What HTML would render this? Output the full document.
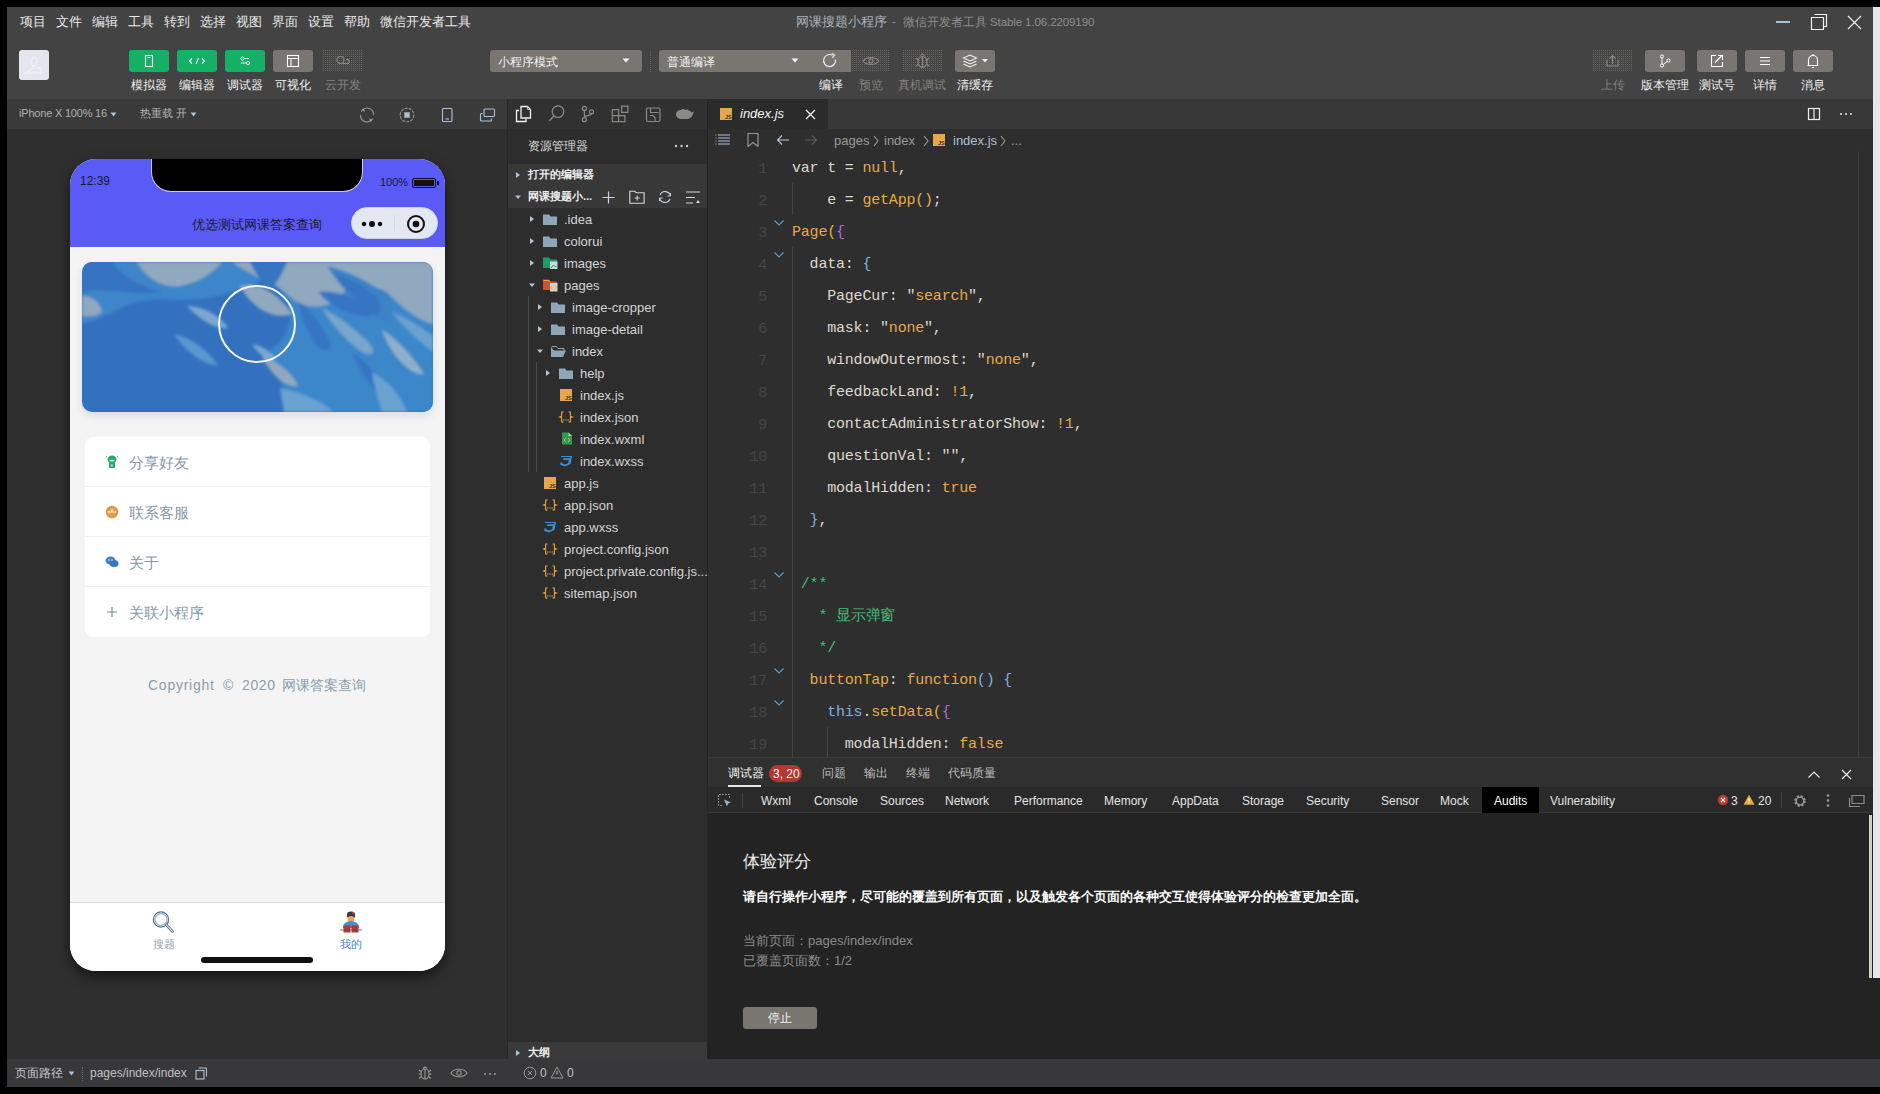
<!DOCTYPE html>
<html><head><meta charset="utf-8">
<style>
*{box-sizing:border-box;margin:0;padding:0}
html,body{width:1880px;height:1094px;overflow:hidden;background:#000;font-family:"Liberation Sans",sans-serif;}
.a{position:absolute}
.t{position:absolute;white-space:nowrap;line-height:1}
#top{left:7px;top:7px;width:1873px;height:92px;background:#434343}
#strip{left:1873px;top:7px;width:7px;height:971px;background:#e4e7ef}
#sim{left:7px;top:99px;width:500px;height:960px;background:#2f2f2f}
#simbar{left:7px;top:99px;width:500px;height:30px;background:#3a3a3a}
#sep1{left:507px;top:99px;width:1px;height:988px;background:#262626}
#exp{left:508px;top:99px;width:199px;height:960px;background:#2d2d2d}
#sep2{left:707px;top:99px;width:1px;height:960px;background:#232323}
#ed{left:708px;top:99px;width:1165px;height:658px;background:#2e2e2e}
#tabbar{left:708px;top:99px;width:1165px;height:30px;background:#383838}
#dbg{left:708px;top:757px;width:1172px;height:302px;background:#232323}
#status{left:7px;top:1059px;width:1873px;height:28px;background:#38383a}

.btn{top:50px;width:40px;height:22px;border-radius:3px}
.g{background:#13b066}
.gr{background:#79756f}
.dot{background-image:linear-gradient(90deg,transparent 50%,#434343 50%),linear-gradient(0deg,#434343 50%,#6c6964 50%);background-size:2px 2px;border-radius:0}
.lbl{top:79px;font-size:12px;color:#f0f0f0}

#phone{left:70px;top:159px;width:375px;height:812px;border-radius:26px;overflow:hidden;background:#f4f4f4;box-shadow:0 6px 14px rgba(0,0,0,0.55)}
#banner{left:12px;top:103px;width:351px;height:150px;border-radius:10px;overflow:hidden;box-shadow:0 4px 8px rgba(40,60,120,0.12)}
.li{left:59px;font-size:15px;color:#8299aa}
.fn{font-size:13px;color:#d4d4d4}
.bc{top:134px;font-size:13px;color:#9a9a9a}
.bcc{top:135px;width:7px;height:12px}
.ln{left:730px;width:37px;text-align:right;font-family:"Liberation Mono",monospace;font-size:15px;color:#464646;letter-spacing:-0.2px}
.code{left:792px;font-family:"Liberation Mono",monospace;font-size:15px;letter-spacing:-0.2px}
.dt{top:795px;font-size:12px;color:#e4e4e4}
.cp{top:519px;font-size:14px;color:#8a9eaf}
</style></head><body>
<div class="a" id="top"></div>
<div class="a" id="sim"></div>
<div class="a" id="simbar"></div>
<div class="a" id="sep1"></div>
<div class="a" id="exp"></div>
<div class="a" id="sep2"></div>
<div class="a" id="ed"></div>
<div class="a" id="tabbar"></div>
<div class="a" id="dbg"></div>
<div class="a" id="status"></div>

<!-- MENU -->
<div class="t" style="left:20px;top:15px;font-size:13px;color:#e8e8e8;word-spacing:0">
<span style="position:absolute;left:0">项目</span><span style="position:absolute;left:36px">文件</span><span style="position:absolute;left:72px">编辑</span><span style="position:absolute;left:108px">工具</span><span style="position:absolute;left:144px">转到</span><span style="position:absolute;left:180px">选择</span><span style="position:absolute;left:216px">视图</span><span style="position:absolute;left:252px">界面</span><span style="position:absolute;left:288px">设置</span><span style="position:absolute;left:324px">帮助</span><span style="position:absolute;left:360px">微信开发者工具</span>
</div>
<div class="t" style="left:796px;top:15px;font-size:13px;color:#a9b0bd">网课搜题小程序</div><div class="t" style="left:892px;top:16px;font-size:12px;color:#8d8d8d">-</div><div class="t" style="left:903px;top:16px;font-size:12px;color:#8d8d8d">微信开发者工具</div><div class="t" style="left:990px;top:17px;font-size:11.5px;color:#8d8d8d;letter-spacing:-0.1px">Stable 1.06.2209190</div>
<!-- window controls -->
<div class="a" style="left:1776px;top:21px;width:14px;height:2px;background:#a9c0d6"></div>
<svg class="a" style="left:1810px;top:13px" width="18" height="18" viewBox="0 0 18 18"><path d="M4.5 1.5h12v12h-3M1.5 4.5h12v12h-12z" fill="none" stroke="#f0f0f0" stroke-width="1.2"/></svg>
<svg class="a" style="left:1847px;top:15px" width="15" height="15" viewBox="0 0 15 15"><path d="M1 1L14 14M14 1L1 14" stroke="#eee" stroke-width="1.2"/></svg>
<!-- avatar -->
<div class="a" style="left:19px;top:50px;width:30px;height:30px;background:#e4e6ee;border-radius:3px"></div>
<svg class="a" style="left:19px;top:50px" width="30" height="30" viewBox="0 0 30 30"><ellipse cx="15" cy="11.5" rx="3" ry="4.2" fill="none" stroke="#fafafa" stroke-width="1.3" stroke-dasharray="1 1"/><path d="M14 16v2l-7 5h15v-5h-6" fill="none" stroke="#fafafa" stroke-width="1.3" stroke-dasharray="1 1"/></svg>
<!-- toolbar buttons -->
<div class="a btn g" style="left:129px"></div>
<div class="a btn g" style="left:177px"></div>
<div class="a btn g" style="left:225px"></div>
<div class="a btn gr" style="left:273px"></div>
<div class="a btn dot" style="left:323px;width:39px"></div>
<svg class="a" style="left:129px;top:50px" width="40" height="22"><rect x="16.5" y="5.5" width="7" height="11" fill="none" stroke="#fff" stroke-width="1.1"/><path d="M18.5 7.5h3" stroke="#fff"/></svg>
<svg class="a" style="left:177px;top:50px" width="40" height="22"><path d="M15 8.5l-2.5 2.5 2.5 2.5M25 8.5l2.5 2.5-2.5 2.5M21.5 8l-2.5 6" fill="none" stroke="#fff" stroke-width="1.1"/></svg>
<svg class="a" style="left:225px;top:50px" width="40" height="22"><circle cx="17.5" cy="8.5" r="1.6" fill="none" stroke="#fff" stroke-width="1"/><path d="M19 8.5h5M16 13h5" stroke="#dfe" stroke-width="1"/><circle cx="23" cy="13" r="1.6" fill="none" stroke="#fff" stroke-width="1"/></svg>
<svg class="a" style="left:273px;top:50px" width="40" height="22"><rect x="14.5" y="5.5" width="11" height="11" fill="none" stroke="#fff" stroke-width="1.1"/><path d="M14.5 8.5h11M18 8.5v8" stroke="#fff" stroke-width="1.1"/></svg>
<svg class="a" style="left:323px;top:50px" width="39" height="22"><circle cx="17.5" cy="10" r="3.5" fill="none" stroke="#8c8781" stroke-width="1.1"/><path d="M20 13.5h5.5l1-2-1.5-2h-2" fill="none" stroke="#8c8781" stroke-width="1.1"/></svg>
<div class="t lbl" style="left:131px">模拟器</div>
<div class="t lbl" style="left:179px">编辑器</div>
<div class="t lbl" style="left:227px">调试器</div>
<div class="t lbl" style="left:275px">可视化</div>
<div class="t lbl" style="left:325px;color:#85817b">云开发</div>
<!-- dropdowns -->
<div class="a" style="left:490px;top:50px;width:152px;height:22px;background:#79756f;border-radius:3px"></div>
<div class="t" style="left:498px;top:56px;font-size:12px;color:#f2f2f2">小程序模式</div>
<svg class="a" style="left:622px;top:58px" width="8" height="5"><path d="M0.5 0.5h7l-3.5 4z" fill="#f4f4f4"/></svg>
<div class="a" style="left:650px;top:51px;width:1px;height:21px;border-left:1px dotted #6a6a6a"></div>
<div class="a" style="left:659px;top:50px;width:192px;height:22px;background:#79756f;border-radius:3px 0 0 3px"></div>
<div class="t" style="left:667px;top:56px;font-size:12px;color:#f2f2f2">普通编译</div>
<svg class="a" style="left:791px;top:58px" width="8" height="5"><path d="M0.5 0.5h7l-3.5 4z" fill="#f4f4f4"/></svg>
<svg class="a" style="left:821px;top:52px" width="18" height="18" viewBox="0 0 18 18"><path d="M14.5 7.5A6 6 0 1 1 11.5 3.3" fill="none" stroke="#e8eef5" stroke-width="1.2"/><path d="M10.8 1.2l2.8 2.1-2.3 2.4" fill="none" stroke="#e8eef5" stroke-width="1.2"/></svg>
<div class="a btn dot" style="left:852px;width:38px"></div>
<div class="a btn dot" style="left:903px;width:39px"></div>
<svg class="a" style="left:852px;top:50px" width="38" height="22"><path d="M11 11c3-4.5 13-4.5 16 0c-3 4.5-13 4.5-16 0z" fill="none" stroke="#8c8781" stroke-width="1.1"/><circle cx="19" cy="11" r="2" fill="none" stroke="#8c8781" stroke-width="1.1"/></svg>
<svg class="a" style="left:903px;top:50px" width="39" height="22"><ellipse cx="19.5" cy="12" rx="4.5" ry="5.5" fill="none" stroke="#8c8781" stroke-width="1.1"/><path d="M19.5 6.5v11M13 8l2.5 2M26 8l-2.5 2M13 16l2.5-2M26 16l-2.5-2M17.5 5.5l2-1.5 2 1.5" fill="none" stroke="#8c8781" stroke-width="1.1"/></svg>
<div class="a" style="left:955px;top:50px;width:40px;height:22px;background:#79756f;border-radius:3px"></div>
<svg class="a" style="left:955px;top:50px" width="40" height="22"><path d="M8.5 8l6.5-3 6.5 3-6.5 3z M8.5 11l6.5 3 6.5-3 M8.5 14l6.5 3 6.5-3" fill="none" stroke="#eef3f8" stroke-width="1.1"/><path d="M27 9h6l-3 3.5z" fill="#f4f4f4"/></svg>
<div class="t lbl" style="left:819px">编译</div>
<div class="t lbl" style="left:859px;color:#85817b">预览</div>
<div class="t lbl" style="left:898px;color:#85817b">真机调试</div>
<div class="t lbl" style="left:957px">清缓存</div>
<!-- right toolbar -->
<div class="a btn dot" style="left:1593px;width:39px"></div>
<svg class="a" style="left:1593px;top:50px" width="39" height="22"><path d="M14 10v6h11v-6M19.5 14V5.5M16.5 8.5l3-3 3 3" fill="none" stroke="#8c8781" stroke-width="1.1"/></svg>
<div class="a btn gr" style="left:1645px"></div>
<div class="a btn gr" style="left:1697px"></div>
<div class="a btn gr" style="left:1745px"></div>
<div class="a btn gr" style="left:1793px"></div>
<svg class="a" style="left:1645px;top:50px" width="40" height="22"><circle cx="17" cy="6.5" r="1.6" fill="none" stroke="#fff" stroke-width="1"/><circle cx="17" cy="15.5" r="1.6" fill="none" stroke="#fff" stroke-width="1"/><circle cx="23.5" cy="10.5" r="1.6" fill="none" stroke="#fff" stroke-width="1"/><path d="M17 8v6M18.3 14.5l3.8-3" stroke="#fff" stroke-width="1"/></svg>
<svg class="a" style="left:1697px;top:50px" width="40" height="22"><path d="M19 5.5h-4.5v11h11V12M18 12.5l7-7M21 5.5h4.5V10" fill="none" stroke="#fff" stroke-width="1.1"/></svg>
<svg class="a" style="left:1745px;top:50px" width="40" height="22"><path d="M15 7.5h10M15 11h10M15 14.5h10" stroke="#fff" stroke-width="1.1"/></svg>
<svg class="a" style="left:1793px;top:50px" width="40" height="22"><path d="M15.5 15.5V10a4.5 4.5 0 0 1 9 0v5.5zM14.5 15.5h11M20 4v1.5M19 17.5h2" fill="none" stroke="#fff" stroke-width="1.1"/></svg>
<div class="t lbl" style="left:1601px;color:#85817b">上传</div>
<div class="t lbl" style="left:1641px">版本管理</div>
<div class="t lbl" style="left:1699px">测试号</div>
<div class="t lbl" style="left:1753px">详情</div>
<div class="t lbl" style="left:1801px">消息</div>

<!-- SIM TOOLBAR -->
<div class="t" style="left:19px;top:108px;font-size:11px;color:#b0b0b0;letter-spacing:-0.2px">iPhone X 100% 16</div>
<svg class="a" style="left:110px;top:112px" width="7" height="5"><path d="M0.5 0.5h6l-3 4z" fill="#a9c3da"/></svg>
<div class="t" style="left:140px;top:108px;font-size:11px;color:#b0b0b0">热重载 开</div>
<svg class="a" style="left:190px;top:112px" width="7" height="5"><path d="M0.5 0.5h6l-3 4z" fill="#a9c3da"/></svg>
<svg class="a" style="left:357px;top:105px" width="20" height="20" viewBox="0 0 20 20"><path d="M6 4.5A6.5 6.5 0 0 1 16.5 10M14 15.5A6.5 6.5 0 0 1 3.5 10" fill="none" stroke="#9a958f" stroke-width="1.1"/><path d="M4.5 6.5l1.5-2.5 1.5 2.5M15.5 13.5l-1.5 2.5-1.5-2.5" fill="none" stroke="#a9c3da" stroke-width="1"/></svg>
<svg class="a" style="left:397px;top:105px" width="20" height="20" viewBox="0 0 20 20"><circle cx="10" cy="10" r="6.8" fill="none" stroke="#9a958f" stroke-width="1.1" stroke-dasharray="3 1.2"/><rect x="7.3" y="7.3" width="5.4" height="5.4" fill="#a9c3da" stroke="#9a958f" stroke-width="0.6"/></svg>
<svg class="a" style="left:437px;top:105px" width="20" height="20" viewBox="0 0 20 20"><rect x="5.5" y="3.5" width="9.5" height="13" rx="1" fill="none" stroke="#a9c3da" stroke-width="1.1"/><path d="M8.5 14h3.5" stroke="#a9c3da" stroke-width="1.1"/></svg>
<svg class="a" style="left:477px;top:105px" width="20" height="20" viewBox="0 0 20 20"><rect x="7" y="4" width="10.5" height="7.5" rx="1" fill="none" stroke="#a9c3da" stroke-width="1.1"/><path d="M5.5 8.5h-1a1 1 0 0 0-1 1v5.5a1 1 0 0 0 1 1h9a1 1 0 0 0 1-1v-1.5" fill="none" stroke="#a9c3da" stroke-width="1.1"/></svg>
<!-- PHONE -->
<div class="a" id="phone">
  <div class="a" style="left:0;top:0;width:375px;height:88px;background:#5a5af6"></div>
  <div class="a" style="left:81px;top:-1px;width:212px;height:34px;background:#000;border-radius:0 0 20px 20px;border:1px solid #c9cbe8;border-top:none"></div>
  <div class="t" style="left:10px;top:16px;font-size:12px;color:#1a1a2a">12:39</div>
  <div class="t" style="left:310px;top:18px;font-size:11px;color:#1a1a2a">100%</div>
  <div class="a" style="left:342px;top:19px;width:24px;height:10px;border:1.5px solid #111;border-radius:2px;padding:1px"><div style="width:100%;height:100%;background:#111"></div></div>
  <div class="a" style="left:367px;top:22px;width:2px;height:4px;background:#111"></div>
  <div class="t" style="left:122px;top:59px;font-size:13px;color:#1b1b2b">优选测试网课答案查询</div>
  <div class="a" style="left:281px;top:48px;width:87px;height:32px;border-radius:16px;background:#e3e7ef;border:1px solid #d0d4de"></div>
  <div class="a" style="left:324px;top:56px;width:1px;height:16px;background:#d5d8de"></div>
  <svg class="a" style="left:290px;top:57px" width="26" height="16"><circle cx="4" cy="8" r="2.2" fill="#111"/><circle cx="12" cy="8" r="3" fill="#111"/><circle cx="20" cy="8" r="2.2" fill="#111"/></svg>
  <svg class="a" style="left:335px;top:54px" width="22" height="22"><circle cx="11" cy="11" r="8" fill="none" stroke="#111" stroke-width="2"/><circle cx="11" cy="11" r="3.3" fill="#111"/></svg>
  <!-- banner -->
  <div class="a" id="banner">
    <svg width="351" height="150" viewBox="0 0 351 150">
      <defs><filter id="bl" x="-10%" y="-10%" width="120%" height="120%"><feGaussianBlur stdDeviation="1.4"/></filter></defs>
      <rect width="351" height="150" fill="#3371bf"/>
      <g filter="url(#bl)">
        <path d="M0 0H205C185 18 160 30 125 36C95 42 65 30 35 48C18 56 8 60 0 62Z" fill="#3c86ca"/>
        <path d="M175 0H351V150H215C205 128 190 108 180 92C200 85 214 62 206 40Z" fill="#3b87ca"/>
        <path d="M0 0H30C40 15 60 25 80 30C60 35 30 25 0 30Z" fill="#3572c2"/>
        <path d="M55 0H140C132 10 118 20 98 24C80 26 64 16 55 0Z" fill="#91a9bf"/>
        <path d="M150 0H351V62C335 58 318 44 305 30C290 22 270 18 262 30C255 42 240 46 226 44C212 42 205 30 195 24C180 18 165 10 150 0Z" fill="#91a9bf"/>
        <path d="M245 4C262 8 285 18 300 30C312 40 312 52 308 62C300 60 290 50 280 42C268 34 258 24 245 4Z" fill="#3a82c8"/>
        <path d="M252 10C266 16 284 26 296 36C300 44 298 52 294 54C284 46 272 34 262 26C256 20 254 14 252 10Z" fill="#3474c4"/>
        <path d="M236 30C250 28 270 34 290 44C296 50 290 56 280 54C266 52 248 44 236 30Z" fill="#3474c4"/>
        <path d="M168 0H205C200 12 195 22 188 28C180 20 172 10 168 0Z" fill="#3474c2"/>
        <path d="M158 24C176 20 196 30 210 52C196 58 172 50 158 24Z" fill="#91a9bf"/>
        <path d="M216 40C226 44 236 58 246 76C252 90 240 92 232 80C224 66 218 52 216 40Z" fill="#3474c4"/>
        <path d="M240 46C256 54 272 66 286 80C296 90 290 96 280 90C266 80 252 66 240 46Z" fill="#78a6cc"/>
        <path d="M105 44C122 44 138 54 146 66C134 68 118 58 105 44Z" fill="#7aa8cf"/>
        <path d="M92 72C110 76 128 90 136 104C120 102 102 88 92 72Z" fill="#5a97cf"/>
        <path d="M0 34C10 34 18 40 20 50C12 56 5 54 0 54Z" fill="#91a9bf"/>
        <path d="M300 68C316 78 332 96 342 112C330 114 310 96 300 68Z" fill="#8fb0cc"/>
        <path d="M310 50C325 56 340 66 351 74V90C338 80 322 66 310 50Z" fill="#6aa2d0"/>
        <path d="M270 90C285 100 300 118 310 140C300 140 282 118 270 90Z" fill="#3474c4"/>
        <path d="M180 94C196 100 210 110 216 124C204 126 188 112 180 94Z" fill="#91a9bf"/>
        <path d="M170 82C180 84 190 90 194 98C186 100 176 92 170 82Z" fill="#7aa8cf"/>
        <path d="M198 126C218 130 238 138 252 150H202Z" fill="#6aa2d2"/>
        <path d="M290 110C305 118 318 132 325 150H300C296 136 292 124 290 110Z" fill="#6aa2d2"/>
      </g>
    </svg>
    <div class="a" style="left:136px;top:23px;width:78px;height:78px;border-radius:50%;border:2px solid #f4f6f8"></div>
  </div>
  <!-- card -->
  <div class="a" style="left:15px;top:278px;width:345px;height:200px;background:#fff;border-radius:8px"></div>
  <div class="a" style="left:15px;top:327px;width:345px;height:1px;background:#f0f0f0"></div>
  <div class="a" style="left:15px;top:377px;width:345px;height:1px;background:#f0f0f0"></div>
  <div class="a" style="left:15px;top:427px;width:345px;height:1px;background:#f0f0f0"></div>
  <div class="t li" style="top:296px">分享好友</div>
  <div class="t li" style="top:346px">联系客服</div>
  <div class="t li" style="top:396px">关于</div>
  <div class="t li" style="top:446px">关联小程序</div>
  <svg class="a" style="left:35px;top:295px" width="14" height="15" viewBox="0 0 14 15"><circle cx="1.5" cy="2.8" r=".7" fill="#9aa08f"/><circle cx="12.5" cy="2.8" r=".7" fill="#9aa08f"/><ellipse cx="7" cy="5.6" rx="4.4" ry="4" fill="#16b066"/><rect x="4" y="8" width="6" height="6" rx="1" fill="#16b066"/><rect x="4.6" y="5.8" width="4.8" height="1.6" fill="#fff"/><rect x="5.8" y="10.4" width="2" height="2" fill="#f3c9c0"/></svg>
  <svg class="a" style="left:35px;top:346px" width="14" height="14" viewBox="0 0 14 14"><circle cx="7" cy="7" r="6.3" fill="#e4a14c"/><path d="M2.5 7h9M7 4v3" stroke="#fff" stroke-width="1"/><circle cx="7" cy="7" r="5" fill="none" stroke="#b8552a" stroke-width="0.7" stroke-dasharray="0.8 1.2"/></svg>
  <svg class="a" style="left:35px;top:396px" width="14" height="14" viewBox="0 0 14 14"><ellipse cx="5.5" cy="5.5" rx="5" ry="4" fill="#3e82c6"/><ellipse cx="9" cy="8.5" rx="4.5" ry="3.6" fill="#3a78bc"/><circle cx="4" cy="5" r="0.7" fill="#fff"/><circle cx="7" cy="5" r="0.7" fill="#fff"/></svg>
  <svg class="a" style="left:36px;top:447px" width="12" height="12"><path d="M6 1v10M1 6h10" stroke="#6e8f99" stroke-width="1.1"/></svg>
  <div class="t cp" style="left:78px;letter-spacing:0.75px">Copyright</div><div class="t cp" style="left:153px">©</div><div class="t cp" style="left:172px;letter-spacing:0.6px">2020</div><div class="t cp" style="left:212px">网课答案查询</div>
  <!-- tabbar -->
  <div class="a" style="left:0;top:743px;width:375px;height:69px;background:#fff;border-top:1px solid #d6dde7"></div>
  <svg class="a" style="left:81px;top:750px" width="24" height="24" viewBox="0 0 24 24"><circle cx="10" cy="10.5" r="7.6" fill="none" stroke="#6d6d6d" stroke-width="1.3"/><circle cx="10" cy="10.5" r="6" fill="none" stroke="#8fbbe0" stroke-width="1.3"/><path d="M15.5 16l6 6.5" stroke="#6d6d6d" stroke-width="2.6" stroke-linecap="round"/><path d="M15.5 16l6 6.5" stroke="#b9d3ea" stroke-width="1.2" stroke-linecap="round"/></svg>
  <div class="t" style="left:83px;top:780px;font-size:11px;color:#9aa7b0">搜题</div>
  <svg class="a" style="left:269px;top:751px" width="24" height="24" viewBox="0 0 24 24"><path d="M8 4.5a4 3 0 0 1 8 0v3H8z" fill="#3a3a44"/><circle cx="14" cy="3" r="1" fill="#d33"/><ellipse cx="12" cy="9" rx="3.3" ry="3" fill="#e7a65a"/><path d="M4 17a8 6 0 0 1 16 0v1H4z" fill="#4b8fd1"/><path d="M4.5 15.5h7v7h-7zM12.5 15.5h7v7h-7z" fill="#b03a32"/><path d="M1 20h22" stroke="#555" stroke-width="0.8"/></svg>
  <div class="t" style="left:270px;top:780px;font-size:11px;color:#3f7fc0">我的</div>
  <div class="a" style="left:131px;top:798px;width:112px;height:6px;border-radius:3px;background:#111"></div>
</div>

<!-- EXPLORER -->
<div class="a" style="left:508px;top:99px;width:199px;height:30px;background:#313131"></div>
<svg class="a" style="left:508px;top:99px" width="199" height="30" viewBox="0 0 199 30">
<path d="M11 11.5H8.5v11h9.5V20" fill="none" stroke="#f2f2f2" stroke-width="1.3"/>
<path d="M13 7.5h6.5l3 3V19H13z" fill="none" stroke="#f2f2f2" stroke-width="1.3"/>
<path d="M19.5 7.5v3h3" fill="none" stroke="#a9c3da" stroke-width="1"/>
<circle cx="50" cy="12.6" r="5.8" fill="none" stroke="#8d8a85" stroke-width="1.2"/>
<path d="M45.8 17l-4.5 5" stroke="#8d8a85" stroke-width="1.3"/>
<circle cx="76.4" cy="9.4" r="2" fill="none" stroke="#8d8a85" stroke-width="1.2"/>
<circle cx="83.5" cy="12.8" r="2" fill="none" stroke="#8d8a85" stroke-width="1.2"/>
<circle cx="76.4" cy="20.7" r="2" fill="none" stroke="#8d8a85" stroke-width="1.2"/>
<path d="M76.4 11.4v7.3M83.5 14.8c0 2-7 1-7 3.5" fill="none" stroke="#8d8a85" stroke-width="1.2"/>
<path d="M104.3 10.6h6.3v6h-6.3zM104.3 16.6h6.3v6h-6.3zM110.6 16.6h6.3v6h-6.3zM113.6 7.2h6.3v6.2h-6.3z" fill="none" stroke="#8d8a85" stroke-width="1.2"/>
<rect x="138.5" y="9" width="13.5" height="13.5" rx="1.5" fill="none" stroke="#8d8a85" stroke-width="1.2"/>
<path d="M142.5 9v4.5h8M142 16.5h3l2 2v4" fill="none" stroke="#8d8a85" stroke-width="1.1"/>
<path d="M168 15.5c0-2.5 2-4.5 5-4.5c1 -1.5 3-1.5 4 0c1-1 3-.5 3.5.5c1.5 0 2.5 1 3 2l2.5-1-1 2.5c-.5 2.5-2.5 4.5-5 5h-6c-3 0-6-1.5-6-4.5z" fill="#8d8a85"/>
</svg>
<div class="t" style="left:528px;top:140px;font-size:12px;color:#dcdcdc">资源管理器</div>
<svg class="a" style="left:674px;top:144px" width="16" height="4"><circle cx="2" cy="2" r="1.2" fill="#ccc"/><circle cx="7.5" cy="2" r="1.2" fill="#ccc"/><circle cx="13" cy="2" r="1.2" fill="#ccc"/></svg>
<div class="a" style="left:508px;top:164px;width:199px;height:44px;background:#383838"></div>
<svg class="a" style="left:514px;top:171px" width="8" height="8"><path d="M2 1v6l4-3z" fill="#a9c3da"/></svg>
<div class="t" style="left:528px;top:169px;font-size:11px;color:#ececec;font-weight:bold">打开的编辑器</div>
<svg class="a" style="left:514px;top:193px" width="8" height="8"><path d="M1 2.5h6l-3 3.5z" fill="#a9c3da"/></svg>
<div class="t" style="left:528px;top:191px;font-size:11px;color:#ececec;font-weight:bold">网课搜题小...</div>
<svg class="a" style="left:601px;top:190px" width="15" height="15"><path d="M7.5 1.5v12M1.5 7.5h12" stroke="#c6d6e4" stroke-width="1.2"/></svg>
<svg class="a" style="left:629px;top:190px" width="16" height="15"><path d="M0.8 1.2h5l1.3 1.5h8v10.5H0.8z" fill="none" stroke="#d8d8d8" stroke-width="1.1"/><path d="M8.2 5.5v5M5.7 8h5" stroke="#c6d6e4" stroke-width="1.1"/></svg>
<svg class="a" style="left:657px;top:189px" width="16" height="16" viewBox="0 0 16 16"><path d="M3 6A5.5 5.5 0 0 1 13.5 7M13 10A5.5 5.5 0 0 1 2.5 9" fill="none" stroke="#c6d6e4" stroke-width="1.1"/><path d="M13.5 4v3h-3M2.5 12V9h3" fill="none" stroke="#c6d6e4" stroke-width="1"/></svg>
<svg class="a" style="left:685px;top:190px" width="16" height="15"><path d="M1 2h14M1 7.5h9M1 13h7" stroke="#d8d8d8" stroke-width="1.1"/><path d="M11 13l2-3 2 3z" fill="#d8d8d8"/></svg>
<svg class="a" style="left:528px;top:215px" width="8" height="8"><path d="M2 1v6l4-3z" fill="#b8c4d0"/></svg>
<svg class="a" style="left:543px;top:214px" width="14" height="11"><path d="M0 0.5h6l1.5 2H14V11H0z" fill="#8fa5b8"/></svg>
<div class="t fn" style="left:564px;top:213px">.idea</div>
<svg class="a" style="left:528px;top:237px" width="8" height="8"><path d="M2 1v6l4-3z" fill="#b8c4d0"/></svg>
<svg class="a" style="left:543px;top:236px" width="14" height="11"><path d="M0 0.5h6l1.5 2H14V11H0z" fill="#8fa5b8"/></svg>
<div class="t fn" style="left:564px;top:235px">colorui</div>
<svg class="a" style="left:528px;top:259px" width="8" height="8"><path d="M2 1v6l4-3z" fill="#b8c4d0"/></svg>
<svg class="a" style="left:543px;top:257px" width="15" height="12"><path d="M0 0.5h6l1.5 2H14V11H0z" fill="#1c9e6a"/><rect x="7" y="4.5" width="7.5" height="7.5" fill="#cfd6dc"/><path d="M8 11l2.5-3 2 2 1-1" stroke="#1c9e6a" fill="none"/></svg>
<div class="t fn" style="left:564px;top:257px">images</div>
<svg class="a" style="left:528px;top:281px" width="8" height="8"><path d="M1 2.5h6l-3 3.5z" fill="#b8c4d0"/></svg>
<svg class="a" style="left:543px;top:279px" width="15" height="13"><path d="M0 0.5h6l1.5 2H14V11H0z" fill="#c8552e"/><path d="M0.5 1.5h5.5l1 1.5" stroke="#e6a23c" fill="none"/><rect x="7" y="4" width="7.5" height="8.5" fill="#d6d2cc"/><path d="M9.5 6.5l-1.5 2 1.5 2M12 6.5l1.5 2-1.5 2" stroke="#e6a23c" fill="none" stroke-width="0.9"/></svg>
<div class="t fn" style="left:564px;top:279px">pages</div>
<svg class="a" style="left:536px;top:303px" width="8" height="8"><path d="M2 1v6l4-3z" fill="#b8c4d0"/></svg>
<svg class="a" style="left:551px;top:302px" width="14" height="11"><path d="M0 0.5h6l1.5 2H14V11H0z" fill="#8fa5b8"/></svg>
<div class="t fn" style="left:572px;top:301px">image-cropper</div>
<svg class="a" style="left:536px;top:325px" width="8" height="8"><path d="M2 1v6l4-3z" fill="#b8c4d0"/></svg>
<svg class="a" style="left:551px;top:324px" width="14" height="11"><path d="M0 0.5h6l1.5 2H14V11H0z" fill="#8fa5b8"/></svg>
<div class="t fn" style="left:572px;top:323px">image-detail</div>
<svg class="a" style="left:536px;top:347px" width="8" height="8"><path d="M1 2.5h6l-3 3.5z" fill="#b8c4d0"/></svg>
<svg class="a" style="left:551px;top:346px" width="15" height="11"><path d="M0.5 0.5h5l1.5 2h6v2" fill="none" stroke="#8fa5b8" stroke-width="1"/><path d="M0 1v10h12l3-6.5H3z" fill="#8fa5b8"/></svg>
<div class="t fn" style="left:572px;top:345px">index</div>
<svg class="a" style="left:544px;top:369px" width="8" height="8"><path d="M2 1v6l4-3z" fill="#b8c4d0"/></svg>
<svg class="a" style="left:559px;top:368px" width="14" height="11"><path d="M0 0.5h6l1.5 2H14V11H0z" fill="#8fa5b8"/></svg>
<div class="t fn" style="left:580px;top:367px">help</div>
<svg class="a" style="left:560px;top:389px" width="12" height="12"><rect width="12" height="12" fill="#e6a74a"/><text x="5" y="10.5" font-size="5.5" font-family="Liberation Sans" fill="#333" font-weight="bold">JS</text></svg>
<div class="t fn" style="left:580px;top:389px">index.js</div>
<svg class="a" style="left:558px;top:411px" width="16" height="12"><path d="M5.5 1H3.6v4.3L1.6 6l2 .7V11h1.9M10.5 1h1.9v4.3l2 .7-2 .7V11h-1.9" fill="none" stroke="#e6a43c" stroke-width="1.1"/><circle cx="5.8" cy="9" r=".65" fill="#e6a43c"/><circle cx="8" cy="9" r=".65" fill="#aaa"/><circle cx="10.2" cy="9" r=".65" fill="#e6a43c"/></svg>
<div class="t fn" style="left:580px;top:411px">index.json</div>
<svg class="a" style="left:561px;top:432px" width="12" height="13"><path d="M1 0.5h6.5l3.5 3.5v8.5H1z" fill="#2e9a55"/><path d="M7.5 0.5v3.5h3.5" fill="#b7d7a8"/><path d="M5 6l-2 2 2 2M7 6l2 2-2 2" stroke="#e6b450" fill="none" stroke-width="0.9"/></svg>
<div class="t fn" style="left:580px;top:433px">index.wxml</div>
<svg class="a" style="left:559px;top:455px" width="14" height="12"><path d="M2 1h11l-1.5 8-6 2.5-4.5-2 .5-2h2l-.3 1 2.5 1 3.5-1.2.6-3.3H4l.4-1.8h6.8l.3-1.2H2z" fill="#3f8fd8"/></svg>
<div class="t fn" style="left:580px;top:455px">index.wxss</div>
<svg class="a" style="left:544px;top:477px" width="12" height="12"><rect width="12" height="12" fill="#e6a74a"/><text x="5" y="10.5" font-size="5.5" font-family="Liberation Sans" fill="#333" font-weight="bold">JS</text></svg>
<div class="t fn" style="left:564px;top:477px">app.js</div>
<svg class="a" style="left:542px;top:499px" width="16" height="12"><path d="M5.5 1H3.6v4.3L1.6 6l2 .7V11h1.9M10.5 1h1.9v4.3l2 .7-2 .7V11h-1.9" fill="none" stroke="#e6a43c" stroke-width="1.1"/><circle cx="5.8" cy="9" r=".65" fill="#e6a43c"/><circle cx="8" cy="9" r=".65" fill="#aaa"/><circle cx="10.2" cy="9" r=".65" fill="#e6a43c"/></svg>
<div class="t fn" style="left:564px;top:499px">app.json</div>
<svg class="a" style="left:543px;top:521px" width="14" height="12"><path d="M2 1h11l-1.5 8-6 2.5-4.5-2 .5-2h2l-.3 1 2.5 1 3.5-1.2.6-3.3H4l.4-1.8h6.8l.3-1.2H2z" fill="#3f8fd8"/></svg>
<div class="t fn" style="left:564px;top:521px">app.wxss</div>
<svg class="a" style="left:542px;top:543px" width="16" height="12"><path d="M5.5 1H3.6v4.3L1.6 6l2 .7V11h1.9M10.5 1h1.9v4.3l2 .7-2 .7V11h-1.9" fill="none" stroke="#e6a43c" stroke-width="1.1"/><circle cx="5.8" cy="9" r=".65" fill="#e6a43c"/><circle cx="8" cy="9" r=".65" fill="#aaa"/><circle cx="10.2" cy="9" r=".65" fill="#e6a43c"/></svg>
<div class="t fn" style="left:564px;top:543px">project.config.json</div>
<svg class="a" style="left:542px;top:565px" width="16" height="12"><path d="M5.5 1H3.6v4.3L1.6 6l2 .7V11h1.9M10.5 1h1.9v4.3l2 .7-2 .7V11h-1.9" fill="none" stroke="#e6a43c" stroke-width="1.1"/><circle cx="5.8" cy="9" r=".65" fill="#e6a43c"/><circle cx="8" cy="9" r=".65" fill="#aaa"/><circle cx="10.2" cy="9" r=".65" fill="#e6a43c"/></svg>
<div class="t fn" style="left:564px;top:565px">project.private.config.js...</div>
<svg class="a" style="left:542px;top:587px" width="16" height="12"><path d="M5.5 1H3.6v4.3L1.6 6l2 .7V11h1.9M10.5 1h1.9v4.3l2 .7-2 .7V11h-1.9" fill="none" stroke="#e6a43c" stroke-width="1.1"/><circle cx="5.8" cy="9" r=".65" fill="#e6a43c"/><circle cx="8" cy="9" r=".65" fill="#aaa"/><circle cx="10.2" cy="9" r=".65" fill="#e6a43c"/></svg>
<div class="t fn" style="left:564px;top:587px">sitemap.json</div>
<div class="a" style="left:528px;top:296px;width:1px;height:176px;background:#4a4a4a"></div>
<div class="a" style="left:536px;top:362px;width:1px;height:110px;background:#4a4a4a"></div>
<div class="a" style="left:508px;top:1042px;width:199px;height:17px;background:#3a3a3a"></div>
<svg class="a" style="left:514px;top:1049px" width="8" height="8"><path d="M2 1v6l4-3z" fill="#a9c3da"/></svg>
<div class="t" style="left:528px;top:1047px;font-size:11px;color:#ececec;font-weight:bold">大纲</div>

<!-- EDITOR -->
<div class="a" style="left:708px;top:99px;width:120px;height:30px;background:#2b2b2b"></div>
<svg class="a" style="left:720px;top:108px" width="12" height="12"><rect width="12" height="12" fill="#e6a74a"/><text x="5" y="10.5" font-size="5.5" font-family="Liberation Sans" fill="#333" font-weight="bold">JS</text></svg>
<div class="t" style="left:740px;top:107px;font-size:13px;font-style:italic;color:#f2f2f2">index.js</div>
<svg class="a" style="left:805px;top:109px" width="11" height="11"><path d="M1 1l9 9M10 1l-9 9" stroke="#f2f2f2" stroke-width="1.3"/></svg>
<svg class="a" style="left:1807px;top:107px" width="14" height="14"><rect x="1.5" y="1.5" width="11" height="11" fill="none" stroke="#eee" stroke-width="1.2"/><path d="M7 1.5v11" stroke="#eee" stroke-width="1.2"/></svg>
<svg class="a" style="left:1839px;top:112px" width="14" height="4"><circle cx="2" cy="2" r="1.1" fill="#ddd"/><circle cx="7" cy="2" r="1.1" fill="#ddd"/><circle cx="12" cy="2" r="1.1" fill="#ddd"/></svg>
<svg class="a" style="left:715px;top:133px" width="16" height="14"><path d="M3 2h12M3 5h12M3 8h12M3 11h12" stroke="#a9c3da" stroke-width="1.1"/><path d="M0.5 2h1M0.5 5h1M0.5 8h1M0.5 11h1" stroke="#a9c3da" stroke-width="1.1"/></svg>
<svg class="a" style="left:747px;top:133px" width="12" height="14"><path d="M1 0.5h10v13l-5-4-5 4z" fill="none" stroke="#9a958f" stroke-width="1.2"/></svg>
<svg class="a" style="left:776px;top:134px" width="14" height="12"><path d="M13 6H1.5M6 1.5L1.5 6 6 10.5" fill="none" stroke="#b8c8d8" stroke-width="1.1"/></svg>
<svg class="a" style="left:804px;top:134px" width="14" height="12"><path d="M1 6h11.5M8 1.5L12.5 6 8 10.5" fill="none" stroke="#5f5c58" stroke-width="1.1"/></svg>
<div class="t bc" style="left:834px">pages</div>
<svg class="a bcc" style="left:873px"><path d="M1 1l4 5-4 5" fill="none" stroke="#9a9a9a" stroke-width="1.1"/></svg>
<div class="t bc" style="left:884px">index</div>
<svg class="a bcc" style="left:923px"><path d="M1 1l4 5-4 5" fill="none" stroke="#9a9a9a" stroke-width="1.1"/></svg>
<svg class="a" style="left:933px;top:134px" width="12" height="12"><rect width="12" height="12" fill="#e6a74a"/><text x="5" y="10.5" font-size="5.5" font-family="Liberation Sans" fill="#333" font-weight="bold">JS</text></svg>
<div class="t bc" style="left:953px;color:#a9c0d4">index.js</div>
<svg class="a bcc" style="left:1000px"><path d="M1 1l4 5-4 5" fill="none" stroke="#9a9a9a" stroke-width="1.1"/></svg>
<div class="t bc" style="left:1011px">...</div>
<div class="a" style="left:792px;top:183px;width:1px;height:32px;background:#444"></div>
<div class="a" style="left:792px;top:247px;width:1px;height:510px;background:#444"></div>
<div class="a" style="left:827px;top:727px;width:1px;height:30px;background:#444"></div>
<div class="a" style="left:1858px;top:151px;width:1px;height:606px;background:#3c3c3c"></div>
<div class="t ln" style="top:162px">1</div>
<div class="t code" style="top:161px"><span style="color:#ddd9d0">var&nbsp;t&nbsp;=&nbsp;</span><span style="color:#e8a94a">null</span><span style="color:#ddd9d0">,</span></div>
<div class="t ln" style="top:194px">2</div>
<div class="t code" style="top:193px"><span style="color:#ddd9d0">&nbsp;&nbsp;&nbsp;&nbsp;e&nbsp;=&nbsp;</span><span style="color:#e8a94a">getApp</span><span style="color:#e0b050">()</span><span style="color:#ddd9d0">;</span></div>
<div class="t ln" style="top:226px">3</div>
<div class="t code" style="top:225px"><span style="color:#e8a94a">Page</span><span style="color:#e0b050">(</span><span style="color:#b267d6">{</span></div>
<div class="t ln" style="top:258px">4</div>
<div class="t code" style="top:257px"><span style="color:#ddd9d0">&nbsp;&nbsp;data:&nbsp;</span><span style="color:#7fb0e0">{</span></div>
<div class="t ln" style="top:290px">5</div>
<div class="t code" style="top:289px"><span style="color:#ddd9d0">&nbsp;&nbsp;&nbsp;&nbsp;PageCur:&nbsp;"</span><span style="color:#e8a94a">search</span><span style="color:#ddd9d0">",</span></div>
<div class="t ln" style="top:322px">6</div>
<div class="t code" style="top:321px"><span style="color:#ddd9d0">&nbsp;&nbsp;&nbsp;&nbsp;mask:&nbsp;"</span><span style="color:#e8a94a">none</span><span style="color:#ddd9d0">",</span></div>
<div class="t ln" style="top:354px">7</div>
<div class="t code" style="top:353px"><span style="color:#ddd9d0">&nbsp;&nbsp;&nbsp;&nbsp;windowOutermost:&nbsp;"</span><span style="color:#e8a94a">none</span><span style="color:#ddd9d0">",</span></div>
<div class="t ln" style="top:386px">8</div>
<div class="t code" style="top:385px"><span style="color:#ddd9d0">&nbsp;&nbsp;&nbsp;&nbsp;feedbackLand:&nbsp;</span><span style="color:#e8a94a">!1</span><span style="color:#ddd9d0">,</span></div>
<div class="t ln" style="top:418px">9</div>
<div class="t code" style="top:417px"><span style="color:#ddd9d0">&nbsp;&nbsp;&nbsp;&nbsp;contactAdministratorShow:&nbsp;</span><span style="color:#e8a94a">!1</span><span style="color:#ddd9d0">,</span></div>
<div class="t ln" style="top:450px">10</div>
<div class="t code" style="top:449px"><span style="color:#ddd9d0">&nbsp;&nbsp;&nbsp;&nbsp;questionVal:&nbsp;"",</span></div>
<div class="t ln" style="top:482px">11</div>
<div class="t code" style="top:481px"><span style="color:#ddd9d0">&nbsp;&nbsp;&nbsp;&nbsp;modalHidden:&nbsp;</span><span style="color:#e8a94a">true</span></div>
<div class="t ln" style="top:514px">12</div>
<div class="t code" style="top:513px"><span style="color:#ddd9d0">&nbsp;&nbsp;</span><span style="color:#7fb0e0">}</span><span style="color:#ddd9d0">,</span></div>
<div class="t ln" style="top:546px">13</div>
<div class="t ln" style="top:578px">14</div>
<div class="t code" style="top:577px"><span style="color:#3fbf74">&nbsp;/**</span></div>
<div class="t ln" style="top:610px">15</div>
<div class="t code" style="top:609px"><span style="color:#3fbf74">&nbsp;&nbsp;&nbsp;*&nbsp;显示弹窗</span></div>
<div class="t ln" style="top:642px">16</div>
<div class="t code" style="top:641px"><span style="color:#3fbf74">&nbsp;&nbsp;&nbsp;*/</span></div>
<div class="t ln" style="top:674px">17</div>
<div class="t code" style="top:673px"><span style="color:#e8a94a">&nbsp;&nbsp;buttonTap</span><span style="color:#ddd9d0">:&nbsp;</span><span style="color:#e8a94a">function</span><span style="color:#7fb0e0">()&nbsp;{</span></div>
<div class="t ln" style="top:706px">18</div>
<div class="t code" style="top:705px"><span style="color:#7fb0e0">&nbsp;&nbsp;&nbsp;&nbsp;this</span><span style="color:#ddd9d0">.</span><span style="color:#e8a94a">setData</span><span style="color:#e0b050">(</span><span style="color:#b267d6">{</span></div>
<div class="t ln" style="top:738px">19</div>
<div class="t code" style="top:737px"><span style="color:#ddd9d0">&nbsp;&nbsp;&nbsp;&nbsp;&nbsp;&nbsp;modalHidden:&nbsp;</span><span style="color:#e8a94a">false</span></div>
<svg class="a" style="left:773px;top:219px" width="12" height="8"><path d="M1.5 1.5l4.5 4.5 4.5-4.5" fill="none" stroke="#5a9bd5" stroke-width="1.2"/></svg>
<svg class="a" style="left:773px;top:251px" width="12" height="8"><path d="M1.5 1.5l4.5 4.5 4.5-4.5" fill="none" stroke="#5a9bd5" stroke-width="1.2"/></svg>
<svg class="a" style="left:773px;top:571px" width="12" height="8"><path d="M1.5 1.5l4.5 4.5 4.5-4.5" fill="none" stroke="#5a9bd5" stroke-width="1.2"/></svg>
<svg class="a" style="left:773px;top:667px" width="12" height="8"><path d="M1.5 1.5l4.5 4.5 4.5-4.5" fill="none" stroke="#5a9bd5" stroke-width="1.2"/></svg>
<svg class="a" style="left:773px;top:699px" width="12" height="8"><path d="M1.5 1.5l4.5 4.5 4.5-4.5" fill="none" stroke="#5a9bd5" stroke-width="1.2"/></svg>

<!-- DEBUG -->
<div class="a" style="left:708px;top:757px;width:1172px;height:30px;background:#303030;border-top:1px solid #3a3a3a"></div>
<div class="t" style="left:728px;top:767px;font-size:12px;color:#f0f0f0">调试器</div>
<div class="a" style="left:728px;top:785px;width:33px;height:2px;background:#e8e8e8"></div>
<div class="a" style="left:769px;top:765px;width:33px;height:17px;border-radius:9px;background:#b03a32"></div>
<div class="t" style="left:773px;top:768px;font-size:12px;color:#f4f4f4">3, 20</div>
<div class="t" style="left:822px;top:767px;font-size:12px;color:#bdbdbd">问题</div>
<div class="t" style="left:864px;top:767px;font-size:12px;color:#bdbdbd">输出</div>
<div class="t" style="left:906px;top:767px;font-size:12px;color:#bdbdbd">终端</div>
<div class="t" style="left:948px;top:767px;font-size:12px;color:#bdbdbd">代码质量</div>
<svg class="a" style="left:1807px;top:770px" width="14" height="9"><path d="M1.5 7.5l5.5-5.5 5.5 5.5" fill="none" stroke="#e8e8e8" stroke-width="1.2"/></svg>
<svg class="a" style="left:1841px;top:769px" width="11" height="11"><path d="M1 1l9 9M10 1l-9 9" stroke="#e8e8e8" stroke-width="1.2"/></svg>
<div class="a" style="left:708px;top:787px;width:1172px;height:26px;background:#2a2a2a;border-bottom:1px solid #383838"></div>
<svg class="a" style="left:717px;top:793px" width="16" height="15"><path d="M5 12.5H1.5v-11h11V5" fill="none" stroke="#8d8a85" stroke-width="1" stroke-dasharray="2 1"/><path d="M7 6.5l7 3-3 1-1 3z" fill="#9db8d0"/></svg>
<div class="a" style="left:742px;top:793px;width:1px;height:15px;background:#444"></div>
<div class="t dt" style="left:761px">Wxml</div>
<div class="t dt" style="left:814px">Console</div>
<div class="t dt" style="left:880px">Sources</div>
<div class="t dt" style="left:945px">Network</div>
<div class="t dt" style="left:1014px">Performance</div>
<div class="t dt" style="left:1104px">Memory</div>
<div class="t dt" style="left:1172px">AppData</div>
<div class="t dt" style="left:1242px">Storage</div>
<div class="t dt" style="left:1306px">Security</div>
<div class="t dt" style="left:1381px">Sensor</div>
<div class="t dt" style="left:1440px">Mock</div>
<div class="a" style="left:1482px;top:787px;width:57px;height:26px;background:#000"></div>
<div class="t dt" style="left:1494px;color:#fff">Audits</div>
<div class="t dt" style="left:1550px">Vulnerability</div>
<svg class="a" style="left:1717px;top:794px" width="12" height="12"><circle cx="6" cy="6" r="5.2" fill="#c0392b"/><path d="M4 4l4 4M8 4l-4 4" stroke="#fff" stroke-width="1.2"/></svg>
<div class="t dt" style="left:1731px">3</div>
<svg class="a" style="left:1743px;top:794px" width="12" height="12"><path d="M6 0.8l5.5 10H0.5z" fill="#e8a83c"/><path d="M6 4v3.5M6 8.5v1" stroke="#fff" stroke-width="1.1"/></svg>
<div class="t dt" style="left:1758px">20</div>
<div class="a" style="left:1781px;top:792px;width:1px;height:16px;background:#444"></div>
<svg class="a" style="left:1792px;top:793px" width="16" height="16" viewBox="0 0 16 16"><circle cx="8" cy="8" r="4.5" fill="none" stroke="#9a9a9a" stroke-width="2.6" stroke-dasharray="2 1.53"/><circle cx="8" cy="8" r="3.8" fill="none" stroke="#9a9a9a" stroke-width="1.3"/></svg>
<svg class="a" style="left:1826px;top:793px" width="4" height="15"><circle cx="2" cy="2.5" r="1.3" fill="#9a9a9a"/><circle cx="2" cy="7.5" r="1.3" fill="#9a9a9a"/><circle cx="2" cy="12.5" r="1.3" fill="#9a9a9a"/></svg>
<svg class="a" style="left:1848px;top:792px" width="17" height="16"><path d="M4 3.5h12v8H4z" fill="none" stroke="#8d8a85" stroke-width="1.2"/><path d="M1.5 6v8.5H12" fill="none" stroke="#8d8a85" stroke-width="1.2"/></svg>
<div class="t" style="left:743px;top:853px;font-size:17px;color:#f0f0f0">体验评分</div>
<div class="t" style="left:743px;top:890px;font-size:13px;color:#fafafa;font-weight:bold">请自行操作小程序，尽可能的覆盖到所有页面，以及触发各个页面的各种交互使得体验评分的检查更加全面。</div>
<div class="t" style="left:743px;top:934px;font-size:13px;color:#8a8a8a">当前页面：pages/index/index</div>
<div class="t" style="left:743px;top:954px;font-size:13px;color:#8a8a8a">已覆盖页面数：1/2</div>
<div class="a" style="left:743px;top:1007px;width:74px;height:22px;background:#79756f;border-radius:3px"></div>
<div class="t" style="left:768px;top:1012px;font-size:12px;color:#f4f4f4">停止</div>
<div class="a" style="left:1869px;top:815px;width:3px;height:163px;background:#cfd0c0"></div>
<div class="t" style="left:15px;top:1067px;font-size:12px;color:#c8c8c8">页面路径</div>
<svg class="a" style="left:68px;top:1071px" width="7" height="5"><path d="M0.5 0.5h6l-3 4z" fill="#a9c3da"/></svg>
<div class="a" style="left:82px;top:1067px;width:1px;height:14px;border-left:1px dotted #666"></div>
<div class="t" style="left:90px;top:1067px;font-size:12px;color:#c0c0c0">pages/index/index</div>
<svg class="a" style="left:195px;top:1067px" width="13" height="13"><path d="M3.5 1h8v8.5" fill="none" stroke="#a9c3da" stroke-width="1"/><rect x="1" y="3.5" width="8" height="8.5" fill="none" stroke="#a9c3da" stroke-width="1.1"/></svg>
<svg class="a" style="left:416px;top:1065px" width="18" height="16" viewBox="0 0 18 16"><ellipse cx="9" cy="9" rx="4" ry="5" fill="none" stroke="#9a958f" stroke-width="1.1"/><path d="M9 4v10M3 5l2.5 2M15 5l-2.5 2M2.5 9h2.5M15.5 9H13M3 13.5l2.5-2M15 13.5l-2.5-2M7 3.5l2-1.5 2 1.5" fill="none" stroke="#9a958f" stroke-width="1.1"/></svg>
<svg class="a" style="left:450px;top:1067px" width="18" height="12"><path d="M1 6c3-5 13-5 16 0c-3 5-13 5-16 0z" fill="none" stroke="#9a958f" stroke-width="1.1"/><circle cx="9" cy="6" r="2.2" fill="none" stroke="#9a958f" stroke-width="1.1"/></svg>
<svg class="a" style="left:483px;top:1072px" width="14" height="4"><circle cx="2" cy="2" r="1" fill="#9a958f"/><circle cx="7" cy="2" r="1" fill="#9a958f"/><circle cx="12" cy="2" r="1" fill="#9a958f"/></svg>
<svg class="a" style="left:523px;top:1066px" width="14" height="14"><circle cx="7" cy="7" r="5.8" fill="none" stroke="#9a958f" stroke-width="1"/><path d="M4.8 4.8l4.4 4.4M9.2 4.8l-4.4 4.4" stroke="#9a958f" stroke-width="1"/></svg>
<div class="t" style="left:540px;top:1067px;font-size:12px;color:#c0c0c0">0</div>
<svg class="a" style="left:550px;top:1066px" width="14" height="13"><path d="M7 1l6 11H1z" fill="none" stroke="#9a958f" stroke-width="1"/><path d="M7 5v3.5" stroke="#a9c3da" stroke-width="1"/></svg>
<div class="t" style="left:567px;top:1067px;font-size:12px;color:#c0c0c0">0</div>
<div class="a" id="strip"></div>
</body></html>
